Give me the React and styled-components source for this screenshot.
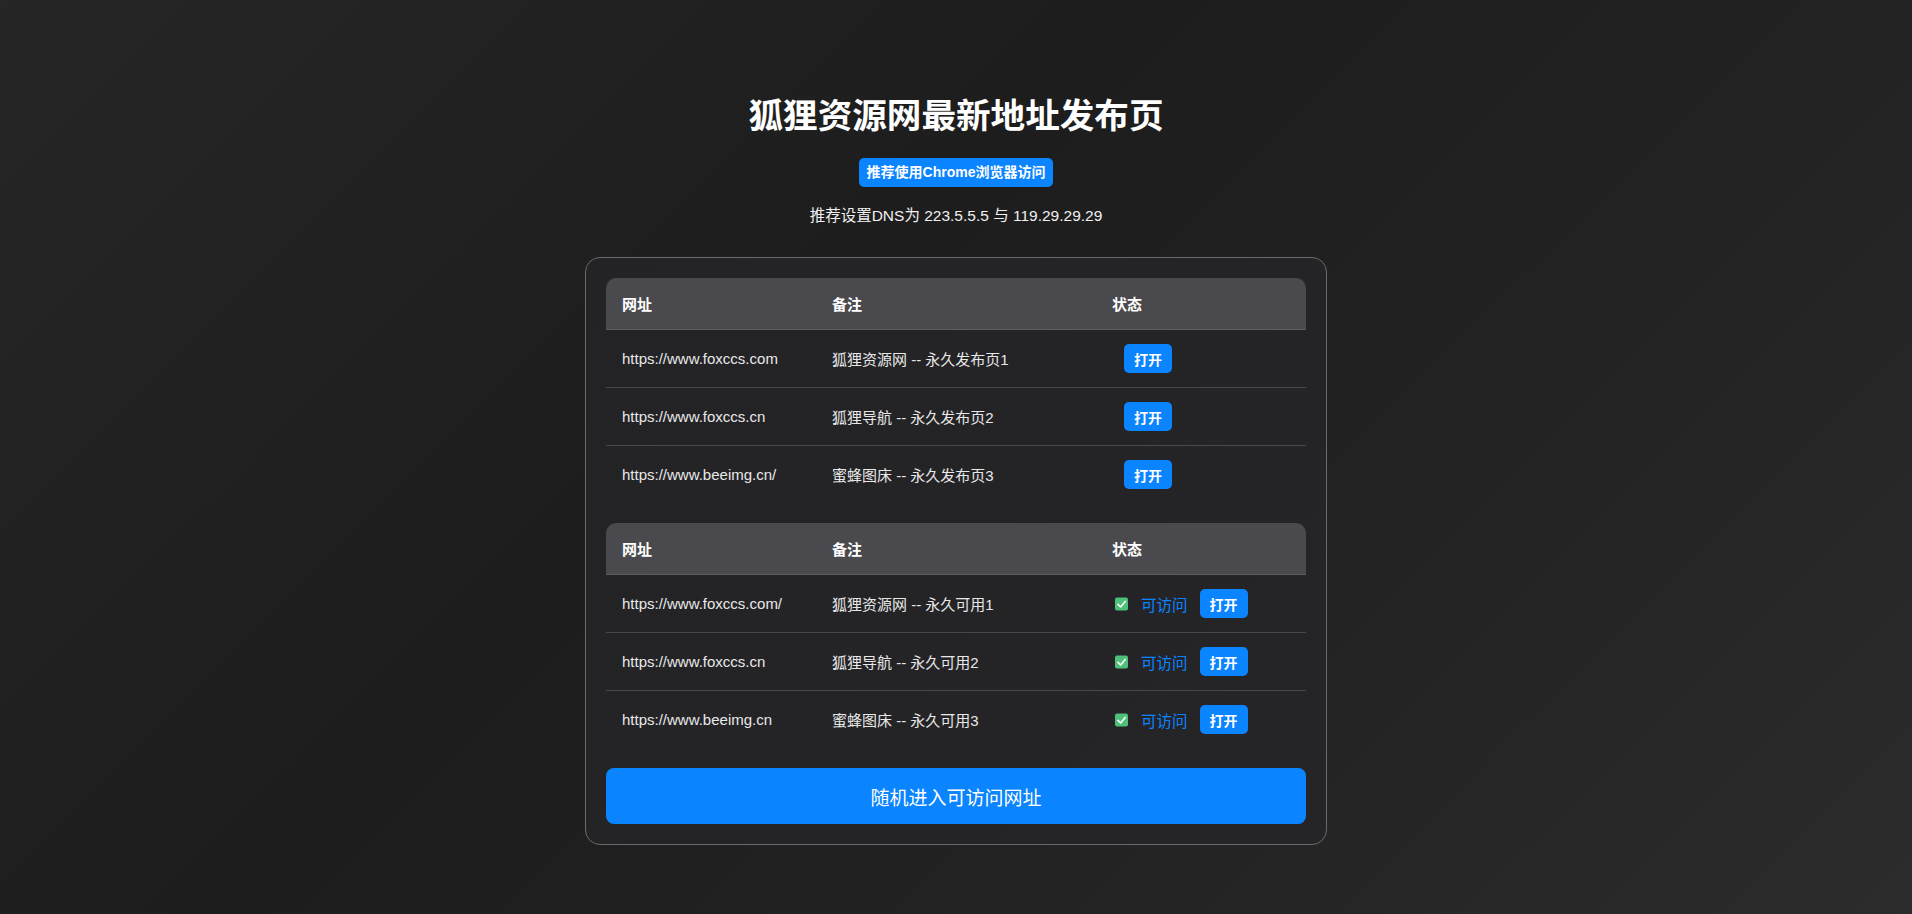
import React from "react";
import styled, { createGlobalStyle } from "styled-components";

const GlobalStyle = createGlobalStyle`
  html, body {
    margin: 0;
    padding: 0;
  }
  body {
    background: linear-gradient(135deg, #262626 0%, #1d1d1d 40%, #232323 70%, #2c2c2c 100%);
    min-height: 100vh;
    font-family: "Liberation Sans", "Noto Sans CJK SC", sans-serif;
    color: #e6e6e6;
  }
`;

const permanent = [
  { url: "https://www.foxccs.com", note: "狐狸资源网 -- 永久发布页1" },
  { url: "https://www.foxccs.cn", note: "狐狸导航 -- 永久发布页2" },
  { url: "https://www.beeimg.cn/", note: "蜜蜂图床 -- 永久发布页3" },
];

const available = [
  { url: "https://www.foxccs.com/", note: "狐狸资源网 -- 永久可用1" },
  { url: "https://www.foxccs.cn", note: "狐狸导航 -- 永久可用2" },
  { url: "https://www.beeimg.cn", note: "蜜蜂图床 -- 永久可用3" },
];

const CheckIcon = () => (
  <CheckBox width="13" height="14" viewBox="0 0 13 14">
    <rect x="0" y="0.5" width="13" height="13" rx="2" fill="#4fc07a" />
    <path d="M3 7.4 L5.6 10 L10.2 4.4" fill="none" stroke="#fff" strokeWidth="1.6" strokeLinecap="round" strokeLinejoin="round" />
  </CheckBox>
);

const LinkTable = ({ rows, showStatus }) => (
  <Table>
    <colgroup>
      <col style={{ width: "30%" }} />
      <col style={{ width: "40%" }} />
      <col style={{ width: "30%" }} />
    </colgroup>
    <thead>
      <tr>
        <Th $first>网址</Th>
        <Th>备注</Th>
        <Th $last>状态</Th>
      </tr>
    </thead>
    <tbody>
      {rows.map((r) => (
        <tr key={r.note}>
          <Td>{r.url}</Td>
          <Td>{r.note}</Td>
          <Td>
            <Status>
              {showStatus && (
                <>
                  <CheckIcon />
                  <Reachable>可访问</Reachable>
                </>
              )}
              <OpenButton>打开</OpenButton>
            </Status>
          </Td>
        </tr>
      ))}
    </tbody>
  </Table>
);

const App = () => {
  return (
    <>
      <GlobalStyle />
      <Page>
        <Title>狐狸资源网最新地址发布页</Title>
        <Badge>推荐使用Chrome浏览器访问</Badge>
        <Dns>推荐设置DNS为 223.5.5.5 与 119.29.29.29</Dns>
        <Card>
          <LinkTable rows={permanent} />
          <LinkTable rows={available} showStatus />
          <RandomButton>随机进入可访问网址</RandomButton>
        </Card>
      </Page>
    </>
  );
};

export default App;

// Styled Components
const Page = styled.div`
  display: flex;
  flex-direction: column;
  align-items: center;
  padding-top: 91px;
  padding-bottom: 40px;
`;

const Title = styled.h1`
  margin: 0;
  font-size: 34.6px;
  line-height: 50px;
  font-weight: bold;
  color: #fff;
`;

const Badge = styled.span`
  margin-top: 17px;
  display: inline-block;
  padding: 4px 8px;
  line-height: 21px;
  font-size: 14px;
  font-weight: bold;
  color: #fff;
  background: #0a84ff;
  border-radius: 5px;
`;

const Dns = styled.p`
  margin: 18px 0 0;
  font-size: 15.5px;
  line-height: 22px;
  color: #f0f0f0;
`;

const Card = styled.div`
  box-sizing: border-box;
  width: 742px;
  margin-top: 30px;
  padding: 20px;
  border: 1px solid #6a6a6e;
  border-radius: 15px;
  background: linear-gradient(135deg, #232326 0%, #252528 100%);
  display: flex;
  flex-direction: column;
  gap: 20px;
`;

const Table = styled.table`
  width: 100%;
  border-collapse: collapse;
  table-layout: fixed;
  font-size: 15px;
`;

const Th = styled.th`
  height: 51px;
  padding: 0 16px;
  text-align: left;
  font-weight: bold;
  color: #fff;
  background: #4a4a4e;
  border-bottom: 1px solid #5c5c60;
  border-top-left-radius: ${(p) => (p.$first ? "10px" : "0")};
  border-top-right-radius: ${(p) => (p.$last ? "10px" : "0")};
`;

const Td = styled.td`
  height: 57px;
  padding: 0 16px;
  color: #e8e8e8;
  border-bottom: 1px solid #48484c;

  tr:last-child > & {
    border-bottom: none;
  }
`;

const Status = styled.div`
  display: flex;
  align-items: center;
`;

const CheckBox = styled.svg`
  margin-left: 3px;
  flex-shrink: 0;
`;

const Reachable = styled.span`
  margin-left: 13px;
  font-size: 15.5px;
  color: #0a84ff;
`;

const OpenButton = styled.button`
  margin-left: 12px;
  height: 29px;
  padding: 0 10px;
  border: none;
  border-radius: 5px;
  background: #0a84ff;
  color: #fff;
  font-family: inherit;
  font-size: 14px;
  font-weight: bold;
  cursor: pointer;
`;

const RandomButton = styled.button`
  height: 56px;
  border: none;
  border-radius: 8px;
  background: #0a84ff;
  color: #fff;
  font-family: inherit;
  font-size: 19px;
  cursor: pointer;
`;
